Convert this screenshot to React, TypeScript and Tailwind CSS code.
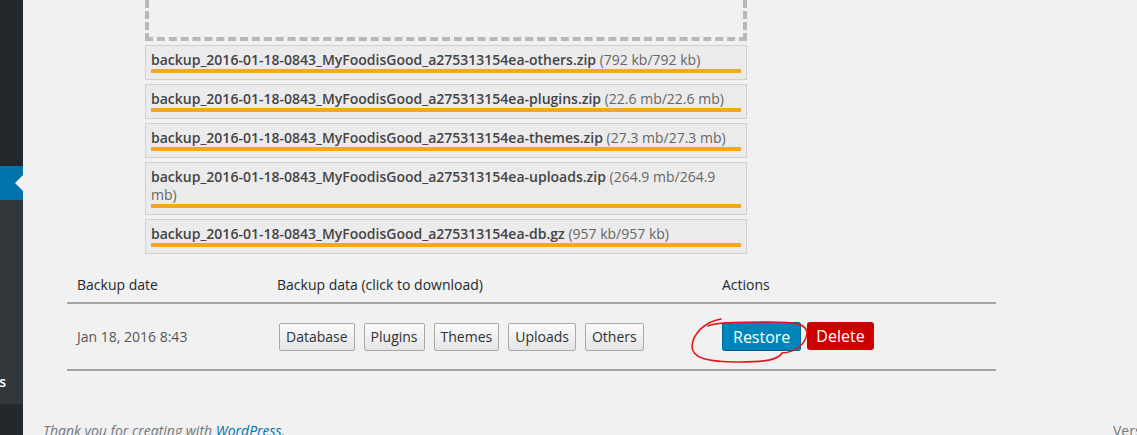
const files = [
  { name: "backup_2016-01-18-0843_MyFoodisGood_a275313154ea-others.zip", size: "(792 kb/792 kb)" },
  { name: "backup_2016-01-18-0843_MyFoodisGood_a275313154ea-plugins.zip", size: "(22.6 mb/22.6 mb)" },
  { name: "backup_2016-01-18-0843_MyFoodisGood_a275313154ea-themes.zip", size: "(27.3 mb/27.3 mb)" },
  { name: "backup_2016-01-18-0843_MyFoodisGood_a275313154ea-uploads.zip", size: "(264.9 mb/264.9 mb)" },
  { name: "backup_2016-01-18-0843_MyFoodisGood_a275313154ea-db.gz", size: "(957 kb/957 kb)" },
];

const downloads = ["Database", "Plugins", "Themes", "Uploads", "Others"];

export default function App() {
  return (
    <div className="relative flex h-[435px] w-[1137px] overflow-hidden bg-[#f1f1f1] font-['Open_Sans',sans-serif]">
      {/* admin menu, cropped */}
      <aside className="flex w-[23px] shrink-0 flex-col bg-[#23282d]">
        <div className="h-[166px] shrink-0" />
        <div className="relative h-[34px] shrink-0 bg-[#0073aa]">
          <span className="absolute right-0 top-[9px] border-y-[8px] border-r-[8px] border-y-transparent border-r-[#f1f1f1]" />
        </div>
        <div className="flex h-[204px] shrink-0 items-end justify-end overflow-hidden whitespace-nowrap bg-[#32373c] pb-[13px] pr-[17px]">
          <span className="text-[14px] font-semibold leading-[18px] text-white">UpdraftPlus Backups</span>
        </div>
      </aside>

      <main className="min-w-0 flex-1">
        {/* drop zone */}
        <div className="ml-[122px] h-[41px] w-[602px] border-4 border-t-0 border-dashed border-[#b4b9be]" />

        {/* download progress */}
        <div className="ml-[122px] mt-[4px] flex w-[602px] flex-col gap-[4px]">
          {files.map((f) => (
            <div key={f.name} className="border border-[#d0d0d0] bg-[#ebebeb] px-[5px] pb-[6px] pt-[5px]">
              <p className="text-[14px] leading-[18px]">
                <span className="font-semibold text-[#444]">{f.name}</span> <span className="text-[#666]">{f.size}</span>
              </p>
              <div className="h-[4px] bg-[#f5a623]" />
            </div>
          ))}
        </div>

        {/* existing backups */}
        <div className="ml-[44px] mt-[13px] w-[929px] text-[14px] leading-[20px]">
          <div className="grid grid-cols-[200px_445px_284px] border-b-2 border-[#a3a3a3] pb-[7px] pt-[8px] text-[#23282d]">
            <div className="pl-[10px]">Backup date</div>
            <div className="pl-[10px]">Backup data (click to download)</div>
            <div className="pl-[10px]">Actions</div>
          </div>
          <div className="grid h-[67px] grid-cols-[200px_445px_284px] items-center border-b-2 border-[#a3a3a3]">
            <div className="pl-[10px] text-[#555]">Jan 18, 2016 8:43</div>
            <div className="flex gap-[9px] pl-[12px]">
              {downloads.map((d) => (
                <button
                  key={d}
                  className="h-[28px] rounded-[2px] border border-[#a9a9a9] bg-gradient-to-b from-[#fbfbfb] to-[#e4e4e4] px-[6px] text-[14px] text-[#2c3338]"
                >
                  {d}
                </button>
              ))}
            </div>
            <div className="flex items-start gap-[6px] pl-[10px]">
              <button className="h-[29px] rounded-[3px] border border-[#006799] border-b-[#005f8a] bg-[#0085ba] px-[10px] text-[16px] text-white">
                Restore
              </button>
              <button className="h-[28px] rounded-[3px] bg-[#c00] px-[9px] text-[16px] text-white">Delete</button>
            </div>
          </div>
        </div>

        <footer className="mt-[50px] flex pl-[20px] text-[14px] leading-[20px] text-[#72777c]">
          <p className="flex-1 italic">
            Thank you for creating with <span className="text-[#0073aa]">WordPress</span>.
          </p>
          <p className="w-[24px] overflow-hidden whitespace-nowrap">Version 4.4.1</p>
        </footer>
      </main>

      {/* hand-drawn mark around Restore */}
      <svg className="pointer-events-none absolute left-0 top-0" width="1137" height="435">
        <path
          d="M 721 319 C 704 322, 693 334, 692 346 C 692 358, 706 362, 740 362 C 765 362, 778 360, 782 353 C 796 352, 806 344, 807 333 C 807 324, 795 322, 770 322 C 745 322, 716 322, 708 326"
          fill="none"
          stroke="#e8141b"
          strokeWidth="1.6"
          strokeLinecap="round"
        />
      </svg>
    </div>
  );
}
